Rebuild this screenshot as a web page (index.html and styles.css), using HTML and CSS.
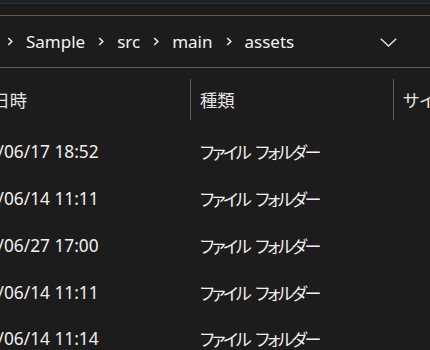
FILE: index.html
```html
<!DOCTYPE html>
<html lang="ja">
<head>
  <meta charset="UTF-8">
  <title>assets</title>
  <link rel="stylesheet" href="styles.css">
</head>
<body>
  <div class="titlestrip"></div>
  <div class="address">
    <div class="crumbs">
      <svg class="sep" width="6" height="9" viewBox="0 0 6 9"><path d="M1.2 1 L4.8 4.5 L1.2 8" fill="none" stroke="#e8e8e8" stroke-width="1.6"/></svg>
      <span>Sample</span>
      <svg class="sep" width="6" height="9" viewBox="0 0 6 9"><path d="M1.2 1 L4.8 4.5 L1.2 8" fill="none" stroke="#e8e8e8" stroke-width="1.6"/></svg>
      <span>src</span>
      <svg class="sep" width="6" height="9" viewBox="0 0 6 9"><path d="M1.2 1 L4.8 4.5 L1.2 8" fill="none" stroke="#e8e8e8" stroke-width="1.6"/></svg>
      <span>main</span>
      <svg class="sep" width="6" height="9" viewBox="0 0 6 9"><path d="M1.2 1 L4.8 4.5 L1.2 8" fill="none" stroke="#e8e8e8" stroke-width="1.6"/></svg>
      <span>assets</span>
    </div>
    <svg class="dropdown" width="17" height="9" viewBox="0 0 17 9"><path d="M0.8 0.8 L8.5 8 L16.2 0.8" fill="none" stroke="#e8e8e8" stroke-width="1.3"/></svg>
  </div>

  <div class="files">
    <div class="head">
      <div class="col date">更新日時</div>
      <div class="col kind">種類</div>
      <div class="col size">サイズ</div>
    </div>
    <div class="row"><div class="col date">2023/06/17 18:52</div><div class="col kind">ファイル フォルダー</div><div class="col size"></div></div>
    <div class="row"><div class="col date">2023/06/14 11:11</div><div class="col kind">ファイル フォルダー</div><div class="col size"></div></div>
    <div class="row"><div class="col date">2023/06/27 17:00</div><div class="col kind">ファイル フォルダー</div><div class="col size"></div></div>
    <div class="row"><div class="col date">2023/06/14 11:11</div><div class="col kind">ファイル フォルダー</div><div class="col size"></div></div>
    <div class="row"><div class="col date">2023/06/14 11:14</div><div class="col kind">ファイル フォルダー</div><div class="col size"></div></div>
  </div>
</body>
</html>
```

FILE: styles.css
```css
html, body {
  margin: 0;
  height: 100%;
  overflow: hidden;
}
body {
  background: #1c1c1c;
  color: #f0f0f0;
  font-family: 'Noto Sans', 'Noto Sans CJK JP', sans-serif;
  font-size: 17.3px;
  font-feature-settings: "palt";
}
.titlestrip {
  height: 3px;
  background: #1e252a;
  border-bottom: 1px solid #2d3237;
  margin-bottom: 11px;
}
.address {
  height: 51px;
  border-top: 1px solid #5c5c5c;
  border-bottom: 1px solid #5c5c5c;
  display: flex;
  align-items: center;
  padding-left: 7px;
  padding-right: 33px;
}
.crumbs {
  display: flex;
  align-items: center;
  gap: 13px;
  font-size: 17px;
  color: #f2f2f2;
}
.crumbs .sep {
  display: block;
}
.dropdown {
  margin-left: auto;
  margin-top: 2px;
}
.files {
  margin-top: 11px;
  margin-left: -52px;
}
.head, .row {
  display: grid;
  grid-template-columns: 242px 203px 1fr;
}
.col {
  white-space: nowrap;
  overflow: hidden;
}
.head {
  height: 41px;
  color: #e4e4e4;
  margin-bottom: 8.5px;
}
.head .col {
  display: flex;
  align-items: center;
  padding-left: 10px;
}
.head .kind, .head .size {
  border-left: 1px solid #5c5c5c;
  padding-left: 9px;
}
.row {
  height: 46.75px;
  align-items: center;
}
.row .col {
  padding-left: 10px;
}
.row .kind {
  font-size: 17px;
  letter-spacing: -2.4px;
  word-spacing: 4px;
}
```
